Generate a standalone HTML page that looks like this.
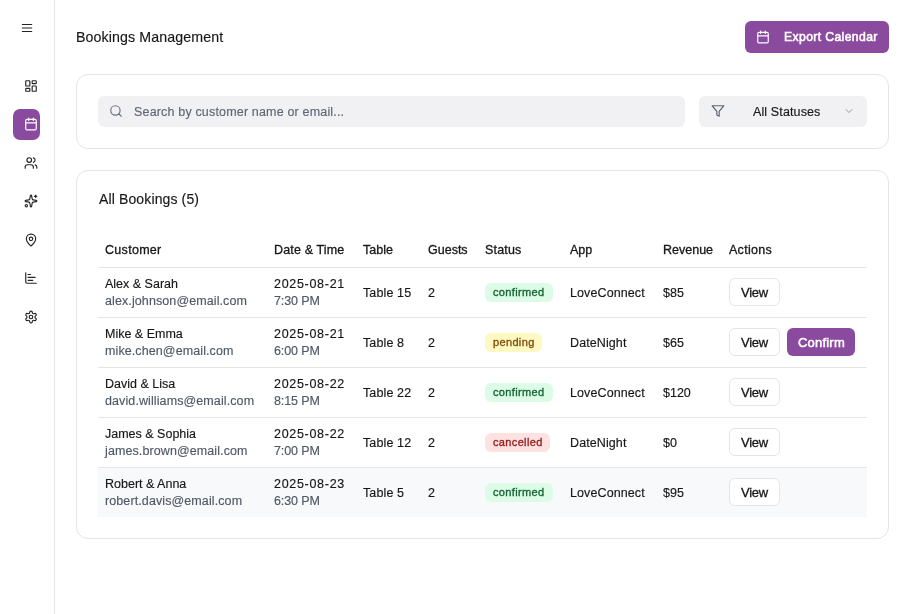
<!DOCTYPE html>
<html><head><meta charset="utf-8"><title>Bookings Management</title>
<style>
html,body{margin:0;padding:0;background:#fff;}
body{width:909px;height:614px;position:relative;overflow:hidden;font-family:"Liberation Sans", sans-serif;}
.t{position:absolute;white-space:nowrap;will-change:transform;-webkit-text-stroke:0.15px currentColor;}
.ic{position:absolute;display:block;}
.card{position:absolute;border:1px solid #e5e5e5;border-radius:12px;background:#fff;}
</style></head><body>
<div style="position:absolute;left:54px;top:0;width:1px;height:614px;background:#e5e5e5"></div>
<svg class="ic" style="left:20px;top:21px;" width="14" height="14" viewBox="0 0 24 24" fill="none" stroke="#222222" stroke-width="2" stroke-linecap="round" stroke-linejoin="round"><line x1="4" x2="20" y1="12" y2="12"/><line x1="4" x2="20" y1="6" y2="6"/><line x1="4" x2="20" y1="18" y2="18"/></svg>
<div style="position:absolute;left:13px;top:109px;width:27px;height:31px;border-radius:7px;background:#8a4a9e"></div>
<svg class="ic" style="left:24px;top:78.5px;" width="14" height="14" viewBox="0 0 24 24" fill="none" stroke="#262626" stroke-width="2" stroke-linecap="round" stroke-linejoin="round"><rect width="7" height="9" x="3" y="3" rx="1"/><rect width="7" height="5" x="14" y="3" rx="1"/><rect width="7" height="9" x="14" y="12" rx="1"/><rect width="7" height="5" x="3" y="16" rx="1"/></svg>
<svg class="ic" style="left:24px;top:117px;" width="14" height="14" viewBox="0 0 24 24" fill="none" stroke="#ffffff" stroke-width="2" stroke-linecap="round" stroke-linejoin="round"><path d="M8 2v4"/><path d="M16 2v4"/><rect width="18" height="18" x="3" y="4" rx="2"/><path d="M3 10h18"/></svg>
<svg class="ic" style="left:24px;top:155.5px;" width="14" height="14" viewBox="0 0 24 24" fill="none" stroke="#262626" stroke-width="2" stroke-linecap="round" stroke-linejoin="round"><path d="M16 21v-2a4 4 0 0 0-4-4H6a4 4 0 0 0-4 4v2"/><circle cx="9" cy="7" r="4"/><path d="M22 21v-2a4 4 0 0 0-3-3.87"/><path d="M16 3.13a4 4 0 0 1 0 7.75"/></svg>
<svg class="ic" style="left:24px;top:194px;" width="14" height="14" viewBox="0 0 24 24" fill="none" stroke="#262626" stroke-width="2" stroke-linecap="round" stroke-linejoin="round"><path d="M11.017 2.814a1 1 0 0 1 1.966 0l1.051 5.558a2 2 0 0 0 1.594 1.594l5.558 1.051a1 1 0 0 1 0 1.966l-5.558 1.051a2 2 0 0 0-1.594 1.594l-1.051 5.558a1 1 0 0 1-1.966 0l-1.051-5.558a2 2 0 0 0-1.594-1.594l-5.558-1.051a1 1 0 0 1 0-1.966l5.558-1.051a2 2 0 0 0 1.594-1.594z"/><path d="M20 2v4"/><path d="M22 4h-4"/><circle cx="4" cy="20" r="2"/></svg>
<svg class="ic" style="left:24px;top:232.5px;" width="14" height="14" viewBox="0 0 24 24" fill="none" stroke="#262626" stroke-width="2" stroke-linecap="round" stroke-linejoin="round"><path d="M20 10c0 4.993-5.539 10.193-7.399 11.799a1 1 0 0 1-1.202 0C9.539 20.193 4 14.993 4 10a8 8 0 0 1 16 0"/><circle cx="12" cy="10" r="3"/></svg>
<svg class="ic" style="left:24px;top:271px;" width="14" height="14" viewBox="0 0 24 24" fill="none" stroke="#262626" stroke-width="2" stroke-linecap="round" stroke-linejoin="round"><path d="M3 3v16a2 2 0 0 0 2 2h16"/><path d="M7 16h8"/><path d="M7 11h12"/><path d="M7 6h4"/></svg>
<svg class="ic" style="left:24px;top:309.5px;" width="14" height="14" viewBox="0 0 24 24" fill="none" stroke="#262626" stroke-width="2" stroke-linecap="round" stroke-linejoin="round"><path d="M12.22 2h-.44a2 2 0 0 0-2 2v.18a2 2 0 0 1-1 1.73l-.43.25a2 2 0 0 1-2 0l-.15-.08a2 2 0 0 0-2.73.73l-.22.38a2 2 0 0 0 .73 2.73l.15.1a2 2 0 0 1 1 1.72v.51a2 2 0 0 1-1 1.74l-.15.09a2 2 0 0 0-.73 2.73l.22.38a2 2 0 0 0 2.73.73l.15-.08a2 2 0 0 1 2 0l.43.25a2 2 0 0 1 1 1.73V20a2 2 0 0 0 2 2h.44a2 2 0 0 0 2-2v-.18a2 2 0 0 1 1-1.73l.43-.25a2 2 0 0 1 2 0l.15.08a2 2 0 0 0 2.73-.73l.22-.39a2 2 0 0 0-.73-2.73l-.15-.08a2 2 0 0 1-1-1.74v-.5a2 2 0 0 1 1-1.74l.15-.09a2 2 0 0 0 .73-2.73l-.22-.38a2 2 0 0 0-2.73-.73l-.15.08a2 2 0 0 1-2 0l-.43-.25a2 2 0 0 1-1-1.73V4a2 2 0 0 0-2-2z"/><circle cx="12" cy="12" r="3"/></svg>
<div class="t" style="left:75.60px;top:29.98px;font-size:14.2px;line-height:14.2px;color:#171717;font-weight:400;letter-spacing:0.11px;">Bookings Management</div>
<div style="position:absolute;left:745px;top:21px;width:144px;height:31.5px;border-radius:6px;background:#8a4a9e"></div>
<svg class="ic" style="left:756px;top:29.7px;" width="14" height="14" viewBox="0 0 24 24" fill="none" stroke="#fff" stroke-width="2" stroke-linecap="round" stroke-linejoin="round"><path d="M8 2v4"/><path d="M16 2v4"/><rect width="18" height="18" x="3" y="4" rx="2"/><path d="M3 10h18"/></svg>
<div class="t" style="left:783.80px;top:30.87px;font-size:12.2px;line-height:12.2px;color:#fff;font-weight:400;letter-spacing:0.38px;-webkit-text-stroke:0.55px #fff">Export Calendar</div>
<div class="card" style="left:76px;top:74px;width:811px;height:73px"></div>
<div style="position:absolute;left:98px;top:96px;width:587px;height:31px;border-radius:6px;background:#f1f1f4"></div>
<svg class="ic" style="left:109px;top:104px;" width="14" height="14" viewBox="0 0 24 24" fill="none" stroke="#6b7280" stroke-width="2" stroke-linecap="round" stroke-linejoin="round"><circle cx="11" cy="11" r="8"/><path d="m21 21-4.3-4.3"/></svg>
<div class="t" style="left:134.00px;top:106.42px;font-size:12.5px;line-height:12.5px;color:#5f6674;font-weight:400;letter-spacing:0.17px;">Search by customer name or email...</div>
<div style="position:absolute;left:699px;top:96px;width:168px;height:31px;border-radius:6px;background:#f1f1f4"></div>
<svg class="ic" style="left:711px;top:104px;" width="14" height="14" viewBox="0 0 24 24" fill="none" stroke="#5b6472" stroke-width="2" stroke-linecap="round" stroke-linejoin="round"><polygon points="22 3 2 3 10 12.46 10 19 14 21 14 12.46 22 3"/></svg>
<div class="t" style="left:753.00px;top:105.82px;font-size:12.5px;line-height:12.5px;color:#171717;font-weight:400;letter-spacing:0.12px;">All Statuses</div>
<svg class="ic" style="left:843px;top:104.5px;" width="12" height="12" viewBox="0 0 24 24" fill="none" stroke="#858b96" stroke-width="1.7" stroke-linecap="round" stroke-linejoin="round"><path d="m6 9 6 6 6-6"/></svg>
<div class="card" style="left:76px;top:170px;width:811px;height:367px"></div>
<div class="t" style="left:98.90px;top:191.95px;font-size:14px;line-height:14px;color:#171717;font-weight:400;letter-spacing:0.13px;">All Bookings (5)</div>
<div class="t" style="left:104.80px;top:243.82px;font-size:12.5px;line-height:12.5px;color:#161616;font-weight:400;letter-spacing:0.3px;-webkit-text-stroke:0.3px #161616">Customer</div>
<div class="t" style="left:273.60px;top:243.82px;font-size:12.5px;line-height:12.5px;color:#161616;font-weight:400;letter-spacing:0.15px;-webkit-text-stroke:0.3px #161616">Date &amp; Time</div>
<div class="t" style="left:363.00px;top:243.82px;font-size:12.5px;line-height:12.5px;color:#161616;font-weight:400;letter-spacing:0px;-webkit-text-stroke:0.3px #161616">Table</div>
<div class="t" style="left:427.80px;top:243.82px;font-size:12.5px;line-height:12.5px;color:#161616;font-weight:400;letter-spacing:0px;-webkit-text-stroke:0.3px #161616">Guests</div>
<div class="t" style="left:484.50px;top:243.82px;font-size:12.5px;line-height:12.5px;color:#161616;font-weight:400;letter-spacing:0.18px;-webkit-text-stroke:0.3px #161616">Status</div>
<div class="t" style="left:570.00px;top:243.82px;font-size:12.5px;line-height:12.5px;color:#161616;font-weight:400;letter-spacing:0px;-webkit-text-stroke:0.3px #161616">App</div>
<div class="t" style="left:662.60px;top:243.82px;font-size:12.5px;line-height:12.5px;color:#161616;font-weight:400;letter-spacing:0px;-webkit-text-stroke:0.3px #161616">Revenue</div>
<div class="t" style="left:729.00px;top:243.82px;font-size:12.5px;line-height:12.5px;color:#161616;font-weight:400;letter-spacing:0.28px;-webkit-text-stroke:0.3px #161616">Actions</div>
<div style="position:absolute;left:98px;top:267px;width:769px;height:1px;background:#e5e5e5"></div>
<div style="position:absolute;left:98px;top:317px;width:769px;height:1px;background:#e5e5e5"></div>
<div class="t" style="left:104.80px;top:278.42px;font-size:12.5px;line-height:12.5px;color:#161616;font-weight:400;letter-spacing:0px;">Alex &amp; Sarah</div>
<div class="t" style="left:104.80px;top:295.22px;font-size:12.5px;line-height:12.5px;color:#4f5867;font-weight:400;letter-spacing:0.1px;">alex.johnson@email.com</div>
<div class="t" style="left:273.60px;top:278.22px;font-size:12.5px;line-height:12.5px;color:#161616;font-weight:400;letter-spacing:0.7px;">2025-08-21</div>
<div class="t" style="left:273.60px;top:295.42px;font-size:12.5px;line-height:12.5px;color:#4f5867;font-weight:400;letter-spacing:-0.1px;">7:30 PM</div>
<div class="t" style="left:363.00px;top:286.72px;font-size:12.5px;line-height:12.5px;color:#161616;font-weight:400;letter-spacing:0.12px;">Table 15</div>
<div class="t" style="left:427.80px;top:286.72px;font-size:12.5px;line-height:12.5px;color:#161616;font-weight:400;letter-spacing:0px;">2</div>
<div style="position:absolute;left:485px;top:283px;width:68px;height:19px;border-radius:6px;background:#dcfce7"></div>
<div class="t" style="left:492.60px;top:286.99px;font-size:11px;line-height:11px;color:#166534;font-weight:400;letter-spacing:0.35px;-webkit-text-stroke:0.35px #166534">confirmed</div>
<div class="t" style="left:570.00px;top:286.72px;font-size:12.5px;line-height:12.5px;color:#161616;font-weight:400;letter-spacing:0.1px;">LoveConnect</div>
<div class="t" style="left:662.60px;top:286.72px;font-size:12.5px;line-height:12.5px;color:#161616;font-weight:400;letter-spacing:0px;">$85</div>
<div style="position:absolute;left:729px;top:278px;width:49px;height:26px;border:1px solid #e5e5e5;border-radius:6px;background:#fff"></div>
<div class="t" style="left:741.00px;top:286.10px;font-size:13px;line-height:13px;color:#161616;font-weight:400;letter-spacing:-0.25px;-webkit-text-stroke:0.3px #161616">View</div>
<div style="position:absolute;left:98px;top:367px;width:769px;height:1px;background:#e5e5e5"></div>
<div class="t" style="left:104.80px;top:328.42px;font-size:12.5px;line-height:12.5px;color:#161616;font-weight:400;letter-spacing:0px;">Mike &amp; Emma</div>
<div class="t" style="left:104.80px;top:345.22px;font-size:12.5px;line-height:12.5px;color:#4f5867;font-weight:400;letter-spacing:0.1px;">mike.chen@email.com</div>
<div class="t" style="left:273.60px;top:328.22px;font-size:12.5px;line-height:12.5px;color:#161616;font-weight:400;letter-spacing:0.7px;">2025-08-21</div>
<div class="t" style="left:273.60px;top:345.42px;font-size:12.5px;line-height:12.5px;color:#4f5867;font-weight:400;letter-spacing:-0.1px;">6:00 PM</div>
<div class="t" style="left:363.00px;top:336.72px;font-size:12.5px;line-height:12.5px;color:#161616;font-weight:400;letter-spacing:0.12px;">Table 8</div>
<div class="t" style="left:427.80px;top:336.72px;font-size:12.5px;line-height:12.5px;color:#161616;font-weight:400;letter-spacing:0px;">2</div>
<div style="position:absolute;left:485px;top:333px;width:57px;height:19px;border-radius:6px;background:#fef9c3"></div>
<div class="t" style="left:492.60px;top:336.99px;font-size:11px;line-height:11px;color:#854d0e;font-weight:400;letter-spacing:0.35px;-webkit-text-stroke:0.35px #854d0e">pending</div>
<div class="t" style="left:570.00px;top:336.72px;font-size:12.5px;line-height:12.5px;color:#161616;font-weight:400;letter-spacing:0.1px;">DateNight</div>
<div class="t" style="left:662.60px;top:336.72px;font-size:12.5px;line-height:12.5px;color:#161616;font-weight:400;letter-spacing:0px;">$65</div>
<div style="position:absolute;left:729px;top:328px;width:49px;height:26px;border:1px solid #e5e5e5;border-radius:6px;background:#fff"></div>
<div class="t" style="left:741.00px;top:336.10px;font-size:13px;line-height:13px;color:#161616;font-weight:400;letter-spacing:-0.25px;-webkit-text-stroke:0.3px #161616">View</div>
<div style="position:absolute;left:787px;top:328px;width:68px;height:28px;border-radius:6px;background:#8a4a9e"></div>
<div class="t" style="left:797.80px;top:336.10px;font-size:13px;line-height:13px;color:#fff;font-weight:400;letter-spacing:0.2px;-webkit-text-stroke:0.5px #fff">Confirm</div>
<div style="position:absolute;left:98px;top:417px;width:769px;height:1px;background:#e5e5e5"></div>
<div class="t" style="left:104.80px;top:378.42px;font-size:12.5px;line-height:12.5px;color:#161616;font-weight:400;letter-spacing:0px;">David &amp; Lisa</div>
<div class="t" style="left:104.80px;top:395.22px;font-size:12.5px;line-height:12.5px;color:#4f5867;font-weight:400;letter-spacing:0.1px;">david.williams@email.com</div>
<div class="t" style="left:273.60px;top:378.22px;font-size:12.5px;line-height:12.5px;color:#161616;font-weight:400;letter-spacing:0.7px;">2025-08-22</div>
<div class="t" style="left:273.60px;top:395.42px;font-size:12.5px;line-height:12.5px;color:#4f5867;font-weight:400;letter-spacing:-0.1px;">8:15 PM</div>
<div class="t" style="left:363.00px;top:386.72px;font-size:12.5px;line-height:12.5px;color:#161616;font-weight:400;letter-spacing:0.12px;">Table 22</div>
<div class="t" style="left:427.80px;top:386.72px;font-size:12.5px;line-height:12.5px;color:#161616;font-weight:400;letter-spacing:0px;">2</div>
<div style="position:absolute;left:485px;top:383px;width:68px;height:19px;border-radius:6px;background:#dcfce7"></div>
<div class="t" style="left:492.60px;top:386.99px;font-size:11px;line-height:11px;color:#166534;font-weight:400;letter-spacing:0.35px;-webkit-text-stroke:0.35px #166534">confirmed</div>
<div class="t" style="left:570.00px;top:386.72px;font-size:12.5px;line-height:12.5px;color:#161616;font-weight:400;letter-spacing:0.1px;">LoveConnect</div>
<div class="t" style="left:662.60px;top:386.72px;font-size:12.5px;line-height:12.5px;color:#161616;font-weight:400;letter-spacing:0px;">$120</div>
<div style="position:absolute;left:729px;top:378px;width:49px;height:26px;border:1px solid #e5e5e5;border-radius:6px;background:#fff"></div>
<div class="t" style="left:741.00px;top:386.10px;font-size:13px;line-height:13px;color:#161616;font-weight:400;letter-spacing:-0.25px;-webkit-text-stroke:0.3px #161616">View</div>
<div style="position:absolute;left:98px;top:467px;width:769px;height:1px;background:#e5e5e5"></div>
<div class="t" style="left:104.80px;top:428.42px;font-size:12.5px;line-height:12.5px;color:#161616;font-weight:400;letter-spacing:0px;">James &amp; Sophia</div>
<div class="t" style="left:104.80px;top:445.22px;font-size:12.5px;line-height:12.5px;color:#4f5867;font-weight:400;letter-spacing:0.1px;">james.brown@email.com</div>
<div class="t" style="left:273.60px;top:428.22px;font-size:12.5px;line-height:12.5px;color:#161616;font-weight:400;letter-spacing:0.7px;">2025-08-22</div>
<div class="t" style="left:273.60px;top:445.42px;font-size:12.5px;line-height:12.5px;color:#4f5867;font-weight:400;letter-spacing:-0.1px;">7:00 PM</div>
<div class="t" style="left:363.00px;top:436.72px;font-size:12.5px;line-height:12.5px;color:#161616;font-weight:400;letter-spacing:0.12px;">Table 12</div>
<div class="t" style="left:427.80px;top:436.72px;font-size:12.5px;line-height:12.5px;color:#161616;font-weight:400;letter-spacing:0px;">2</div>
<div style="position:absolute;left:485px;top:433px;width:65px;height:19px;border-radius:6px;background:#fee2e2"></div>
<div class="t" style="left:492.60px;top:436.99px;font-size:11px;line-height:11px;color:#991b1b;font-weight:400;letter-spacing:0.35px;-webkit-text-stroke:0.35px #991b1b">cancelled</div>
<div class="t" style="left:570.00px;top:436.72px;font-size:12.5px;line-height:12.5px;color:#161616;font-weight:400;letter-spacing:0.1px;">DateNight</div>
<div class="t" style="left:662.60px;top:436.72px;font-size:12.5px;line-height:12.5px;color:#161616;font-weight:400;letter-spacing:0px;">$0</div>
<div style="position:absolute;left:729px;top:428px;width:49px;height:26px;border:1px solid #e5e5e5;border-radius:6px;background:#fff"></div>
<div class="t" style="left:741.00px;top:436.10px;font-size:13px;line-height:13px;color:#161616;font-weight:400;letter-spacing:-0.25px;-webkit-text-stroke:0.3px #161616">View</div>
<div style="position:absolute;left:98px;top:468px;width:769px;height:49px;background:#f8f9fb"></div>
<div class="t" style="left:104.80px;top:478.42px;font-size:12.5px;line-height:12.5px;color:#161616;font-weight:400;letter-spacing:0px;">Robert &amp; Anna</div>
<div class="t" style="left:104.80px;top:495.22px;font-size:12.5px;line-height:12.5px;color:#4f5867;font-weight:400;letter-spacing:0.1px;">robert.davis@email.com</div>
<div class="t" style="left:273.60px;top:478.22px;font-size:12.5px;line-height:12.5px;color:#161616;font-weight:400;letter-spacing:0.7px;">2025-08-23</div>
<div class="t" style="left:273.60px;top:495.42px;font-size:12.5px;line-height:12.5px;color:#4f5867;font-weight:400;letter-spacing:-0.1px;">6:30 PM</div>
<div class="t" style="left:363.00px;top:486.72px;font-size:12.5px;line-height:12.5px;color:#161616;font-weight:400;letter-spacing:0.12px;">Table 5</div>
<div class="t" style="left:427.80px;top:486.72px;font-size:12.5px;line-height:12.5px;color:#161616;font-weight:400;letter-spacing:0px;">2</div>
<div style="position:absolute;left:485px;top:483px;width:68px;height:19px;border-radius:6px;background:#dcfce7"></div>
<div class="t" style="left:492.60px;top:486.99px;font-size:11px;line-height:11px;color:#166534;font-weight:400;letter-spacing:0.35px;-webkit-text-stroke:0.35px #166534">confirmed</div>
<div class="t" style="left:570.00px;top:486.72px;font-size:12.5px;line-height:12.5px;color:#161616;font-weight:400;letter-spacing:0.1px;">LoveConnect</div>
<div class="t" style="left:662.60px;top:486.72px;font-size:12.5px;line-height:12.5px;color:#161616;font-weight:400;letter-spacing:0px;">$95</div>
<div style="position:absolute;left:729px;top:478px;width:49px;height:26px;border:1px solid #e5e5e5;border-radius:6px;background:#fff"></div>
<div class="t" style="left:741.00px;top:486.10px;font-size:13px;line-height:13px;color:#161616;font-weight:400;letter-spacing:-0.25px;-webkit-text-stroke:0.3px #161616">View</div>
</body></html>
